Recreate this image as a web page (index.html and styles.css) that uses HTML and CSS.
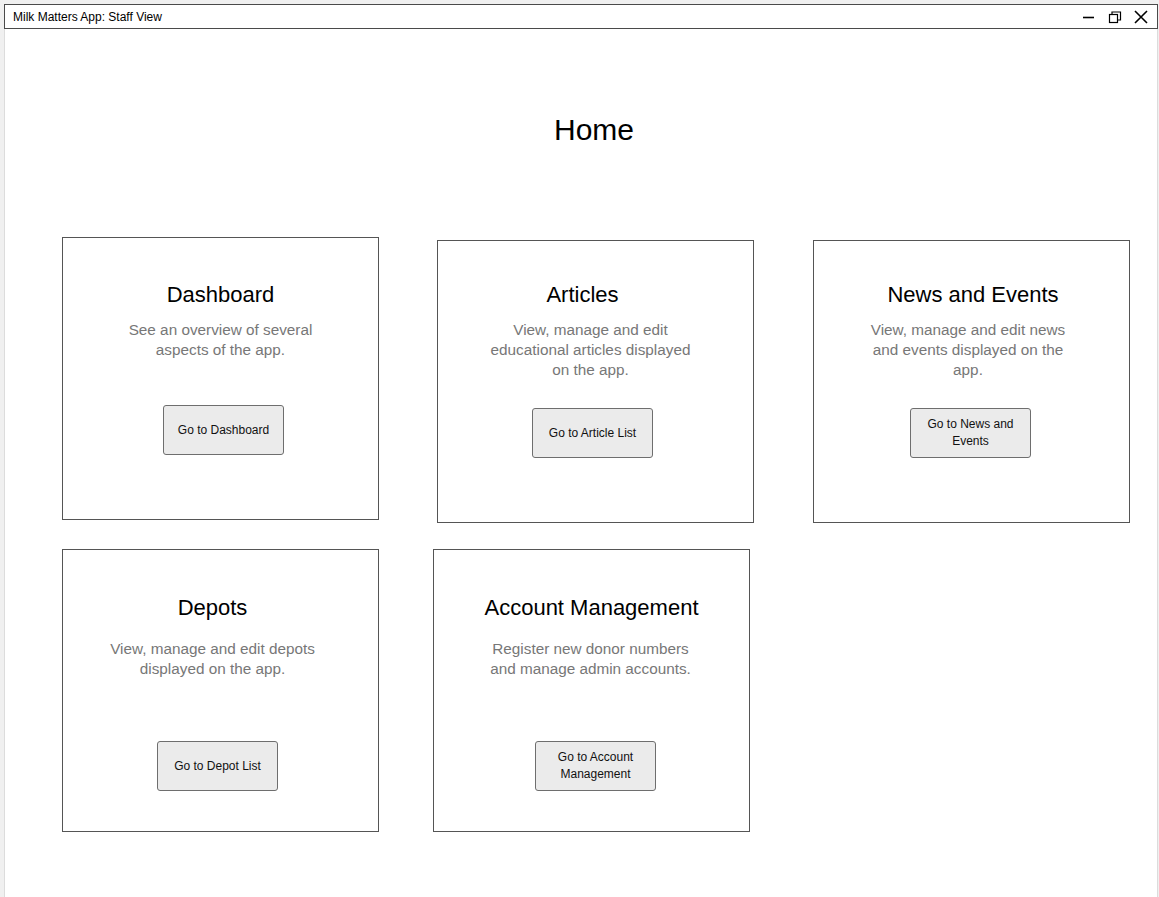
FILE: index.html
```html
<!DOCTYPE html>
<html lang="en">
<head>
<meta charset="utf-8">
<title>Milk Matters App: Staff View</title>
<link rel="stylesheet" href="styles.css">
</head>
<body>
<div class="window">
  <div class="titlebar">
    <span class="title-text">Milk Matters App: Staff View</span>
    <div class="controls">
      <svg class="ctl" width="14" height="14" viewBox="0 0 14 14"><path d="M1 7.5h11" stroke="#000" stroke-width="1.6" fill="none"/></svg>
      <svg class="ctl" width="14" height="14" viewBox="0 0 14 14"><rect x="1.5" y="4.5" width="8" height="8" stroke="#000" stroke-width="1.2" fill="none"/><path d="M4 4.5V2h8.5v8H9.5" stroke="#000" stroke-width="1.2" fill="none"/></svg>
      <svg class="ctl" width="14" height="14" viewBox="0 0 14 14"><path d="M1 1l12 12M13 1L1 13" stroke="#000" stroke-width="1.6" fill="none"/></svg>
    </div>
  </div>
  <main class="content">
    <h1 class="page-title">Home</h1>
    <div class="row row-1">
      <section class="card card-raised">
        <h2 class="card-title">Dashboard</h2>
        <p class="card-desc">See an overview of several aspects of the app.</p>
        <button class="btn btn-r3">Go to Dashboard</button>
      </section>
      <section class="card">
        <h2 class="card-title t-l13">Articles</h2>
        <p class="card-desc d-l5">View, manage and edit educational articles displayed on the app.</p>
        <button class="btn btn-l3">Go to Article List</button>
      </section>
      <section class="card card-push">
        <h2 class="card-title t-r2">News and Events</h2>
        <p class="card-desc d-l3">View, manage and edit news and events displayed on the app.</p>
        <button class="btn btn-l1">Go to News and Events</button>
      </section>
    </div>
    <div class="row row-2">
      <section class="card">
        <h2 class="card-title t-l8">Depots</h2>
        <p class="card-desc d-l8">View, manage and edit depots displayed on the app.</p>
        <button class="btn btn-l3">Go to Depot List</button>
      </section>
      <section class="card">
        <h2 class="card-title">Account Management</h2>
        <p class="card-desc d-l1">Register new donor numbers and manage admin accounts.</p>
        <button class="btn btn-r4">Go to Account Management</button>
      </section>
    </div>
  </main>
</div>
</body>
</html>
```
FILE: styles.css
```css
html, body {
  margin: 0;
  padding: 0;
  background: #f0f0f0;
  font-family: "Liberation Sans", Arial, sans-serif;
  overflow: hidden;
}
body {
  padding: 4px 0 0 4px;
  height: 897px;
  box-sizing: border-box;
}
.window {
  width: 1154px;
  display: flex;
  flex-direction: column;
  height: 893px;
}
.titlebar {
  height: 25px;
  box-sizing: border-box;
  border: 1px solid #4a4a4a;
  background: #fff;
  display: flex;
  align-items: center;
  justify-content: space-between;
  padding: 0 9px 0 8px;
}
.title-text {
  font-size: 12px;
  color: #000;
  padding-top: 1px;
}
.controls {
  display: flex;
  align-items: center;
  gap: 12px;
}
.ctl { display: block; }
.content {
  flex: 1;
  background: #fff;
  border-left: 1px solid #dcdcdc;
  border-right: 1px solid #dcdcdc;
  padding-top: 84px;
}
.page-title {
  margin: 0;
  text-align: center;
  font-weight: normal;
  font-size: 30px;
  line-height: 34px;
  color: #000;
  padding-left: 26px;
}
.row {
  display: flex;
  align-items: flex-start;
  padding-left: 57px;
}
.row-1 {
  margin-top: 93px;
  gap: 58px;
}
.row-2 {
  margin-top: 26px;
  gap: 54px;
}
.card {
  width: 317px;
  height: 283px;
  box-sizing: border-box;
  border: 1px solid #555;
  display: flex;
  flex-direction: column;
  align-items: center;
  padding-top: 41px;
}
.card-push { margin-left: 1px; }
.card-title {
  margin: 0;
  font-weight: normal;
  font-size: 22px;
  line-height: 26px;
  color: #000;
}
.card-desc {
  margin: 12px 0 0;
  width: 214px;
  height: 60px;
  font-size: 15.3px;
  line-height: 20px;
  color: #777;
  text-align: center;
}
.btn {
  margin-top: 28px;
  width: 121px;
  height: 50px;
  box-sizing: border-box;
  background: #ebebeb;
  border: 1px solid #6e6e6e;
  border-radius: 3px;
  font-family: "Liberation Sans", Arial, sans-serif;
  font-size: 12px;
  line-height: 17px;
  color: #111;
  padding: 0 10px;
  text-align: center;
}
.card-raised { margin-top: -3px; padding-top: 44px; }
.card-raised .btn { margin-top: 25px; }
.row-2 .card { padding-top: 45px; }
.row-2 .card-desc { margin-top: 18px; }
.row-2 .btn { margin-top: 42px; }

/* small horizontal nudges of the sketch */
.t-l13 { margin-right: 26px; }
.t-l8 { margin-right: 16px; }
.t-r2 { margin-left: 3px; }
.d-l5 { margin-right: 10px; }
.d-l3 { margin-right: 7px; }
.d-l8 { margin-right: 16px; }
.d-l1 { margin-right: 2px; }
.btn-r3 { margin-left: 6px; }
.btn-r4 { margin-left: 8px; }
.btn-l3 { margin-right: 6px; }
.btn-l1 { margin-right: 2px; }
```
